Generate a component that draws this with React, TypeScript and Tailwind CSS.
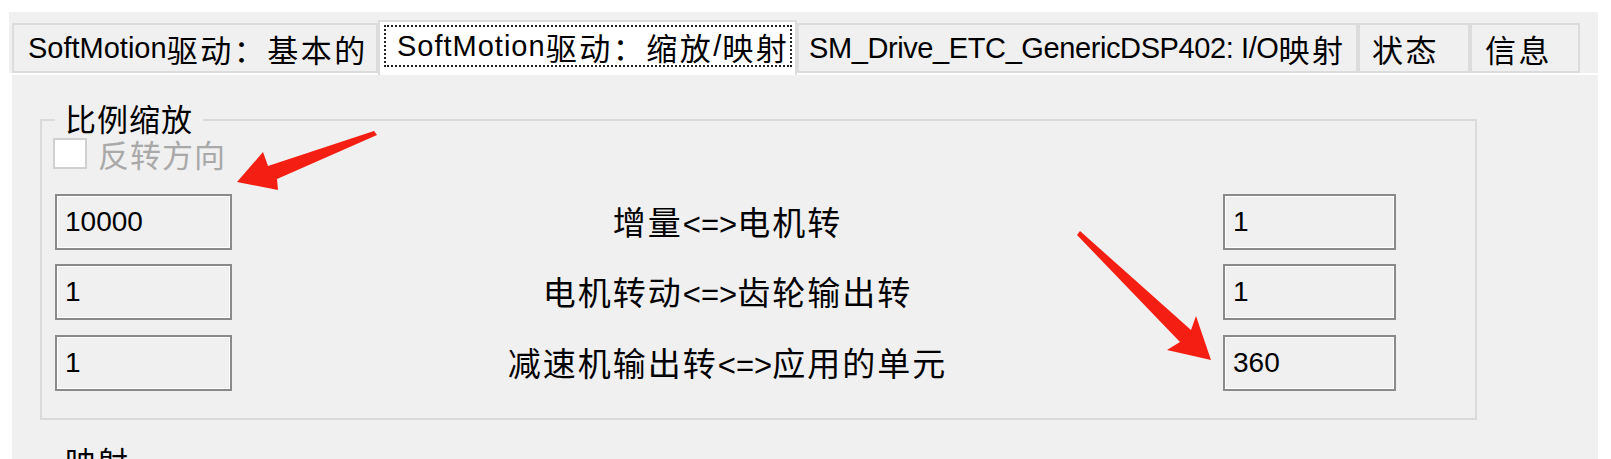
import React from "react";

const CJK_RE = /([\u3000-\u303f\u4e00-\u9fff\uff00-\uffef]+)/;

function Mixed({ text, cjk, lat }: { text: string; cjk: string; lat: string }) {
  const parts = text.split(CJK_RE).filter((p) => p.length > 0);
  return (
    <>
      {parts.map((p, i) =>
        /[\u3000-\u303f\u4e00-\u9fff\uff00-\uffef]/.test(p) ? (
          <span key={i} className={cjk}>
            {p}
          </span>
        ) : (
          <span key={i} className={lat}>
            {p}
          </span>
        )
      )}
    </>
  );
}

const TAB_CJK = "font-['Noto_Sans_CJK_SC',sans-serif] text-[31px] tracking-[2.5px]";
const TAB_LAT = "font-['Liberation_Sans','Noto_Sans_CJK_SC',sans-serif] text-[29px]";
const TAB_LAT_WIDE = "font-['Liberation_Sans','Noto_Sans_CJK_SC',sans-serif] text-[29px] tracking-[1px]";
const TAB_LAT_TIGHT = "font-['Liberation_Sans','Noto_Sans_CJK_SC',sans-serif] text-[29px] tracking-[-0.4px]";
const LBL_CJK = "font-['Noto_Sans_CJK_SC',sans-serif] text-[33px] tracking-[2px]";
const LBL_LAT = "font-['Liberation_Sans','Noto_Sans_CJK_SC',sans-serif] text-[31px]";
const PLAIN_CJK = "font-['Noto_Sans_CJK_SC',sans-serif] text-[31px] tracking-[1px]";

function Tab({ label, w, pl, lat }: { label: string; w: string; pl: string; lat?: string }) {
  return (
    <div
      className={`${w} ${pl} h-[50px] border-2 border-[#dcdcdc] bg-[#f0f0f0] flex items-center whitespace-nowrap text-black leading-none`}
    >
      <Mixed text={label} cjk={TAB_CJK} lat={lat ?? TAB_LAT} />
    </div>
  );
}

function Box({ value, w }: { value: string; w: string }) {
  return (
    <div
      className={`${w} h-[56px] border-2 border-[#8a8a8a] bg-[#f0f0f0] shadow-[inset_1px_1px_0_#ffffff,inset_-1px_-1px_0_#ffffff] flex items-center pl-[8px] shrink-0`}
    >
      <span className="font-['Liberation_Sans',sans-serif] text-[28px] text-black leading-none">{value}</span>
    </div>
  );
}

function Row({ left, label, right, mt }: { left: string; label: string; right: string; mt: string }) {
  return (
    <div className={`flex items-center h-[56px] ${mt} pl-[13px] pr-[79px]`}>
      <Box value={left} w="w-[177px]" />
      <div className="flex-1 text-center whitespace-nowrap text-black leading-none">
        <Mixed text={label} cjk={LBL_CJK} lat={LBL_LAT} />
      </div>
      <Box value={right} w="w-[173px]" />
    </div>
  );
}

export default function App() {
  return (
    <div className="relative bg-white w-[1611px] h-[459px] overflow-hidden">
      <div className="ml-[9px] mt-[12px] w-[1589px] h-[447px] bg-[#f0f0f0] flex flex-col overflow-hidden">
        {/* tab strip */}
        <div className="flex items-end pl-[3px] h-[61px] shrink-0">
          <Tab label="SoftMotion驱动：基本的" w="w-[366px]" pl="pl-[14px]" />
          <div className="relative z-10 w-[419px] h-[55px] mb-[-2px] border-x-2 border-t-2 border-[#dcdcdc] bg-white pt-[3px] pl-[4px] pr-[3px]">
            <div className="h-[42px] border-2 border-dotted border-[#222222] flex items-center pl-[11px] whitespace-nowrap text-black leading-none">
              <Mixed text="SoftMotion驱动：缩放/映射" cjk={TAB_CJK} lat={TAB_LAT_WIDE} />
            </div>
          </div>
          <Tab label="SM_Drive_ETC_GenericDSP402: I/O映射" w="w-[561px]" pl="pl-[10px]" lat={TAB_LAT_TIGHT} />
          <Tab label="状态" w="w-[112px]" pl="pl-[12px]" />
          <Tab label="信息" w="w-[110px]" pl="pl-[13px]" />
        </div>

        {/* tab page */}
        <div className="flex-1 border-t-2 border-l-[3px] border-white bg-[#f0f0f0] pl-[28px] pt-[28px]">
          <fieldset className="w-[1437px] border-2 border-[#dadada] pb-[27px]">
            <legend className={`ml-[13px] px-[10px] pb-[4px] leading-[30px] text-black ${PLAIN_CJK}`}>比例缩放</legend>
            <div className="flex items-center pl-[11px] h-[32px]">
              <div className="w-[34px] h-[31px] bg-white border-2 border-[#d0d0d0]" />
              <span className={`${PLAIN_CJK} ml-[11px] text-[#a9a9a9] leading-none`}>反转方向</span>
            </div>
            <Row left="10000" label="增量<=>电机转" right="1" mt="mt-[25px]" />
            <Row left="1" label="电机转动<=>齿轮输出转" right="1" mt="mt-[14px]" />
            <Row left="1" label="减速机输出转<=>应用的单元" right="360" mt="mt-[15px]" />
          </fieldset>
          <fieldset className="mt-[26px] w-[1437px] border-2 border-[#dadada] h-[80px]">
            <legend className={`ml-[13px] px-[10px] pb-[4px] leading-[30px] text-black ${PLAIN_CJK}`}>映射</legend>
          </fieldset>
        </div>
      </div>

      {/* red annotation arrows */}
      <svg className="absolute left-0 top-0 pointer-events-none" width="1611" height="459" viewBox="0 0 1611 459">
        <polygon points="237,182 263,152 268,166 374,131 377,135 277,179 278,190" fill="#f51e12" />
        <polygon points="1080,231 1191,330 1196,316 1211,360 1167,350 1180,342 1077,235" fill="#f51e12" />
      </svg>
    </div>
  );
}
